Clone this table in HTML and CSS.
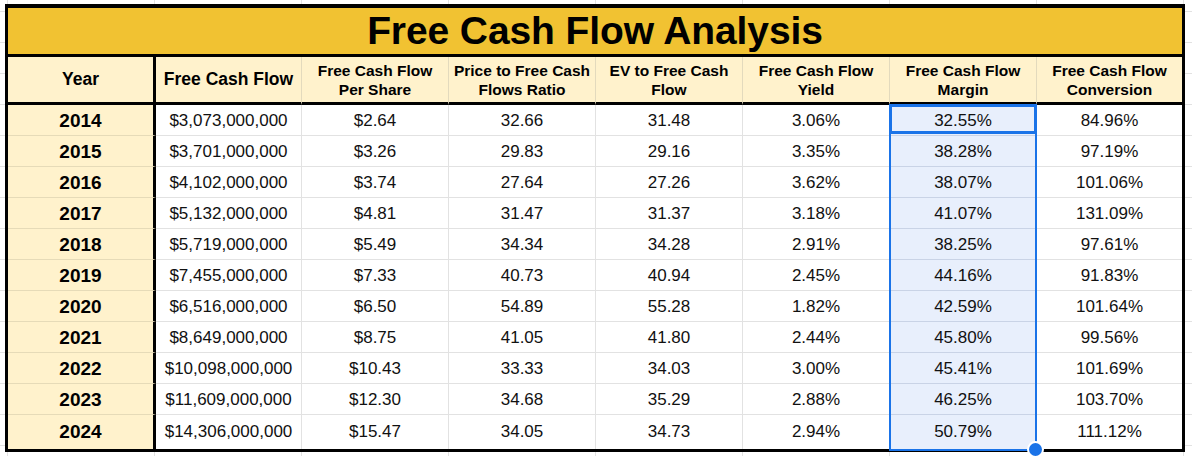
FILE: index.html
```html
<!DOCTYPE html>
<html lang="en">
<head>
<meta charset="utf-8">
<title>Free Cash Flow Analysis</title>
<link rel="stylesheet" href="styles.css">
</head>
<body>
<div class="page">
  <div class="sheet">
    <div class="title">Free Cash Flow Analysis</div>

    <div class="cell hd yr-hd big">Year</div>
    <div class="cell hd big">Free Cash Flow</div>
    <div class="cell hd">Free Cash Flow<br>Per Share</div>
    <div class="cell hd">Price to Free Cash<br>Flows Ratio</div>
    <div class="cell hd">EV to Free Cash<br>Flow</div>
    <div class="cell hd">Free Cash Flow<br>Yield</div>
    <div class="cell hd">Free Cash Flow<br>Margin</div>
    <div class="cell hd last">Free Cash Flow<br>Conversion</div>

    <div class="cell yr">2014</div><div class="cell">$3,073,000,000</div><div class="cell">$2.64</div><div class="cell">32.66</div><div class="cell">31.48</div><div class="cell">3.06%</div><div class="cell sel first">32.55%<div class="range"><span class="handle"></span></div></div><div class="cell last">84.96%</div>
    <div class="cell yr">2015</div><div class="cell">$3,701,000,000</div><div class="cell">$3.26</div><div class="cell">29.83</div><div class="cell">29.16</div><div class="cell">3.35%</div><div class="cell sel">38.28%</div><div class="cell last">97.19%</div>
    <div class="cell yr">2016</div><div class="cell">$4,102,000,000</div><div class="cell">$3.74</div><div class="cell">27.64</div><div class="cell">27.26</div><div class="cell">3.62%</div><div class="cell sel">38.07%</div><div class="cell last">101.06%</div>
    <div class="cell yr">2017</div><div class="cell">$5,132,000,000</div><div class="cell">$4.81</div><div class="cell">31.47</div><div class="cell">31.37</div><div class="cell">3.18%</div><div class="cell sel">41.07%</div><div class="cell last">131.09%</div>
    <div class="cell yr">2018</div><div class="cell">$5,719,000,000</div><div class="cell">$5.49</div><div class="cell">34.34</div><div class="cell">34.28</div><div class="cell">2.91%</div><div class="cell sel">38.25%</div><div class="cell last">97.61%</div>
    <div class="cell yr">2019</div><div class="cell">$7,455,000,000</div><div class="cell">$7.33</div><div class="cell">40.73</div><div class="cell">40.94</div><div class="cell">2.45%</div><div class="cell sel">44.16%</div><div class="cell last">91.83%</div>
    <div class="cell yr">2020</div><div class="cell">$6,516,000,000</div><div class="cell">$6.50</div><div class="cell">54.89</div><div class="cell">55.28</div><div class="cell">1.82%</div><div class="cell sel">42.59%</div><div class="cell last">101.64%</div>
    <div class="cell yr">2021</div><div class="cell">$8,649,000,000</div><div class="cell">$8.75</div><div class="cell">41.05</div><div class="cell">41.80</div><div class="cell">2.44%</div><div class="cell sel">45.80%</div><div class="cell last">99.56%</div>
    <div class="cell yr">2022</div><div class="cell">$10,098,000,000</div><div class="cell">$10.43</div><div class="cell">33.33</div><div class="cell">34.03</div><div class="cell">3.00%</div><div class="cell sel">45.41%</div><div class="cell last">101.69%</div>
    <div class="cell yr">2023</div><div class="cell">$11,609,000,000</div><div class="cell">$12.30</div><div class="cell">34.68</div><div class="cell">35.29</div><div class="cell">2.88%</div><div class="cell sel">46.25%</div><div class="cell last">103.70%</div>
    <div class="cell yr end">2024</div><div class="cell end">$14,306,000,000</div><div class="cell end">$15.47</div><div class="cell end">34.05</div><div class="cell end">34.73</div><div class="cell end">2.94%</div><div class="cell sel end">50.79%</div><div class="cell last end">111.12%</div>
  </div>
</div>
</body>
</html>
```

FILE: styles.css
```css
* {
  box-sizing: border-box;
}

html,
body {
  margin: 0;
  height: 100%;
  overflow: hidden;
}

body {
  background-color: #ffffff;
  background-image:
    linear-gradient(to right, #e2e2e2 1px, transparent 1px),
    linear-gradient(to bottom, #e2e2e2 1px, transparent 1px);
  background-size: 147px 100%, 100% 31px;
  background-position: 7px 0, 0 11px;
  font-family: "Liberation Sans", Arial, Helvetica, sans-serif;
  color: #000000;
}

.page {
  padding: 4px 0 0 5px;
}

.sheet {
  display: grid;
  width: max-content;
  grid-template-columns: 148px 146px repeat(5, 147px) 145px;
  grid-template-rows: 49px 48px repeat(10, 31px) 34px;
  border: 3px solid #000000;
  border-top-width: 4px;
  background: #ffffff;
}

.title {
  grid-column: 1 / -1;
  display: flex;
  align-items: center;
  justify-content: center;
  background: #f1c232;
  border-bottom: 3px solid #000000;
  font-size: 39px;
  font-weight: 700;
  letter-spacing: -0.1px;
}

.cell {
  display: flex;
  align-items: center;
  justify-content: center;
  text-align: center;
  padding-top: 2px;
  border-right: 1px solid #e2e2e2;
  border-bottom: 1px solid #e2e2e2;
  font-size: 17px;
  color: #111111;
  white-space: nowrap;
}

.hd {
  padding-top: 0;
  background: #fff2cc;
  border-right-color: #e3dabd;
  border-bottom: 3px solid #000000;
  font-size: 15.5px;
  font-weight: 700;
  line-height: 19px;
  color: #000000;
}

.hd.big {
  font-size: 17.5px;
}

.yr-hd,
.yr {
  border-right: 3px solid #000000;
}

.yr {
  background: #fff2cc;
  border-bottom-color: #e6dbb8;
  font-size: 19px;
  font-weight: 700;
  color: #000000;
}

.last {
  border-right: none;
}

.end {
  border-bottom: none;
  padding-top: 0;
}

.sel {
  background: #e8effc;
  border-bottom-color: #c9d3e6;
  border-right-color: #c9d3e6;
}

.first {
  position: relative;
}

.first::after {
  content: "";
  position: absolute;
  top: -1px;
  left: -1px;
  right: -1px;
  bottom: 1px;
  border: 3px solid #1a73e8;
}

.range {
  position: absolute;
  top: -1px;
  left: -1px;
  right: -1px;
  height: 347px;
  border: 2px solid #1a73e8;
  z-index: 2;
}

.handle {
  position: absolute;
  right: -9px;
  bottom: -9px;
  width: 17px;
  height: 17px;
  border-radius: 50%;
  background: #1a73e8;
  border: 2px solid #ffffff;
}
```
